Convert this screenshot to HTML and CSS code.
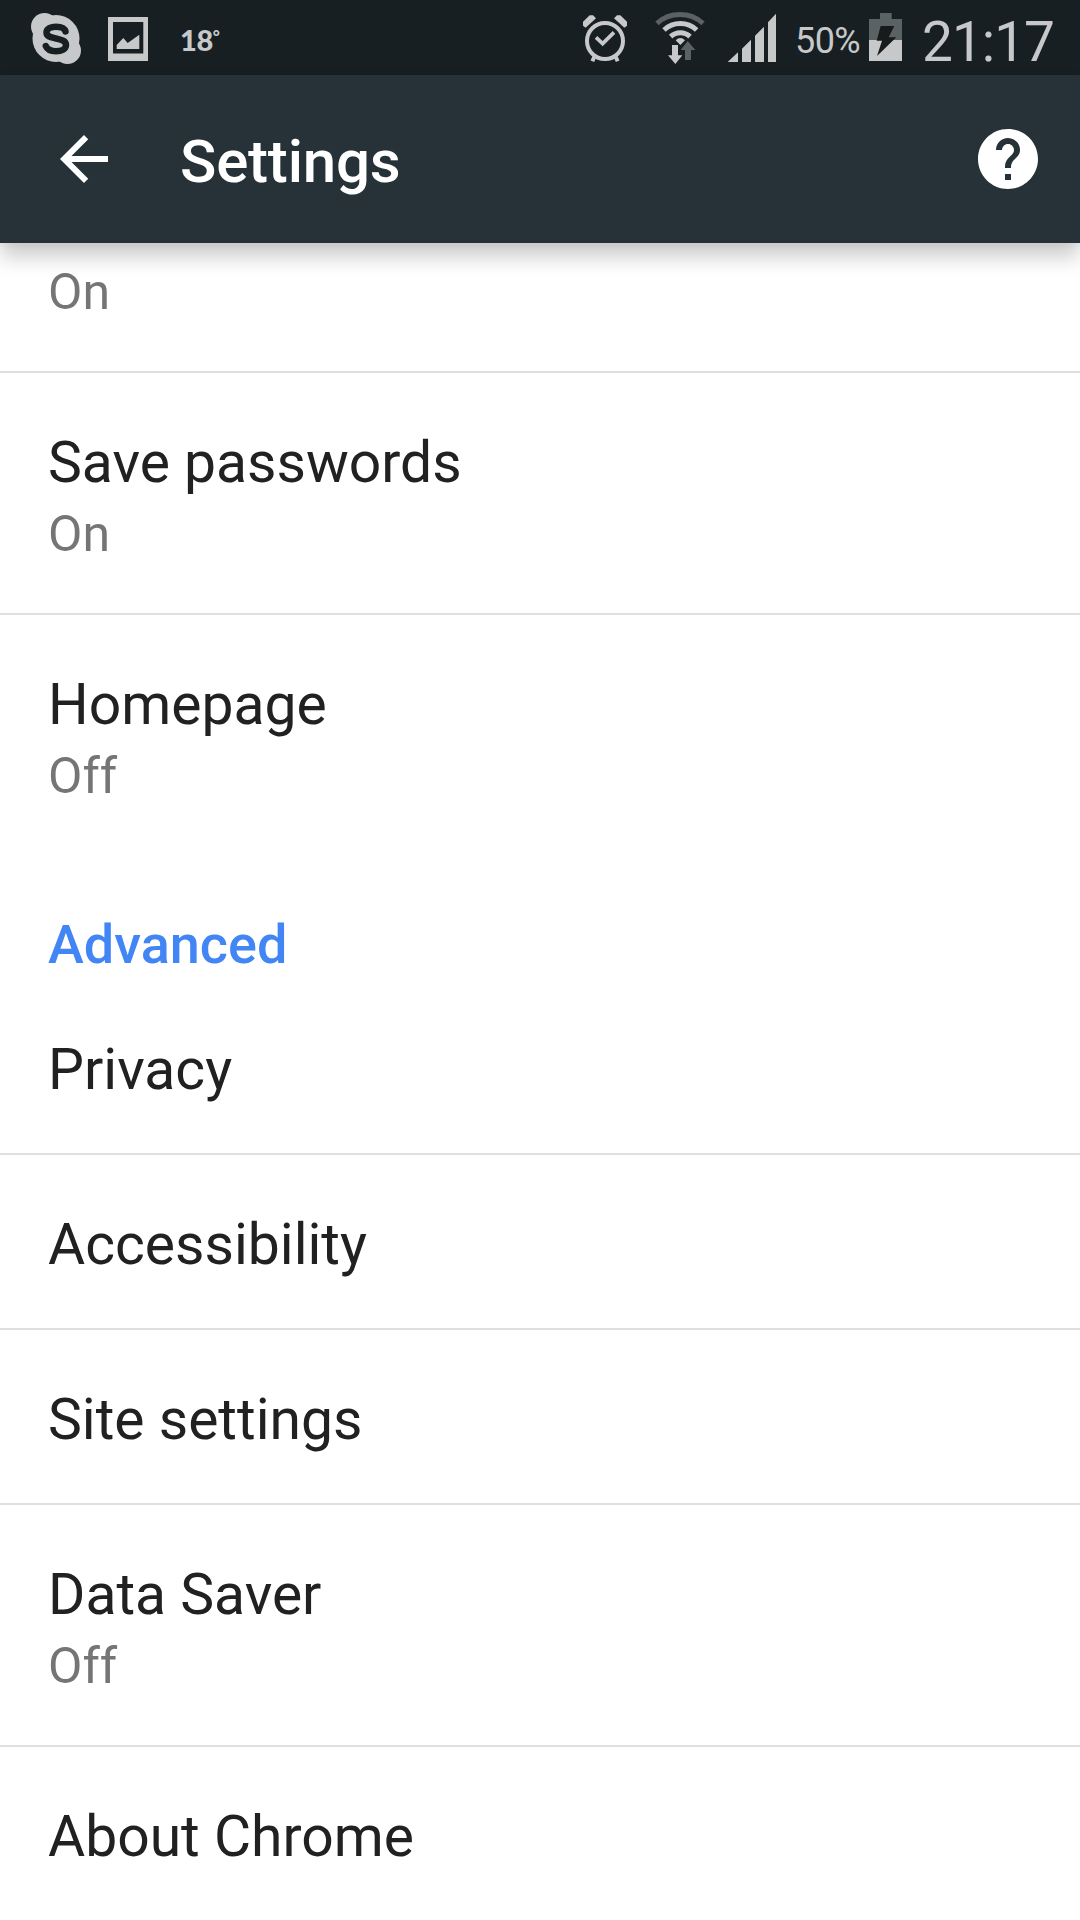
FILE: index.html
```html
<!DOCTYPE html>
<html lang="en">
<head>
<meta charset="utf-8">
<title>Settings</title>
<link rel="stylesheet" href="styles.css">
</head>
<body>
<div class="screen">
  <div class="status-bar">
    <svg class="status-skype" width="50" height="51" viewBox="31 13 50 51">
      <circle cx="56" cy="38.500" r="23.500" fill="#c6c8ca"/>
      <circle cx="44.500" cy="26.500" r="13.500" fill="#c6c8ca"/>
      <circle cx="67.500" cy="50.500" r="13.500" fill="#c6c8ca"/>
      <path d="M65.500 31.500C64.500 28 61 26.700 56 26.700c-5 0-9.500 1.800-9.500 5.800 0 4.200 4.500 4.800 9.500 6s10 2.200 10 6.500c0 4-4.500 6.200-10 6.200s-9-2.200-10.200-5.200" fill="none" stroke="#181f22" stroke-width="6.500" stroke-linecap="round"/>
    </svg>
    <svg class="status-picture" width="40" height="44" viewBox="0 0 40 44">
      <path fill="#c6c8ca" fill-rule="evenodd" d="M0 0h40v44H0zM5 5v31.500h30.300V5z"/>
      <path fill="#c6c8ca" d="M8.700 32v-4l6.600-7 4.400 5 11.600-8.300V32z"/>
    </svg>
    <span class="status-temp">18<span class="status-degree">°</span></span>
    <div class="status-right">
      <svg class="status-signals" width="196" height="75" viewBox="0 0 588 225">
        <g transform="translate(-60 0)" fill="#c6c8ca">
          <g fill="none" stroke="#c6c8ca">
            <circle cx="135" cy="123" r="54" stroke-width="12"/>
            <path d="M108 112l20 19 34-34" stroke-width="11"/>
            <path d="M103 170l-6 14M167 170l6 14" stroke-width="12"/>
          </g>
          <path d="M77 83l-8-6v-12l20-19h10l9 9zM193 83l8-6v-12l-20-19h-10l-9 9z"/>
          <g fill="none" stroke-width="15">
            <path d="M291 70A104 104 0 0 1 429 70" stroke="#5b6264"/>
            <path d="M312 90A72 72 0 0 1 410 90" stroke="#c6c8ca"/>
            <path d="M332 110A42 42 0 0 1 390 110" stroke="#c6c8ca"/>
          </g>
          <path d="M347 121q14-14 28 0l-14 14z"/>
          <path d="M336 135h18v31h13l-21 26-22-26h12z"/>
          <path d="M383 123l23 27h-13v30h-18v-30h-13z" fill="#5b6264"/>
          <path d="M503 186l31-29v29zM546 146l27-27v67h-27zM585 107l27-27v106h-27zM624 67l24-26v145h-24z"/>
        </g>
      </svg>
      <span class="status-percent">50%</span>
      <svg class="status-battery" width="33" height="48" viewBox="0 0 99 144">
        <path d="M33 0h35v18h31v63H0V18h33z" fill="#5b6264"/>
        <path d="M0 81h99v63H0z" fill="#c6c8ca"/>
        <path d="M35 39h41L59 73h23L24 129l15-46H23z" fill="#181a1b"/>
      </svg>
      <span class="status-clock">21:17</span>
    </div>
  </div>
  <header class="toolbar">
    <svg class="toolbar-icon" viewBox="0 0 24 24"><path fill="#fff" d="M20 11H7.830l5.590-5.590L12 4l-8 8 8 8 1.410-1.410L7.830 13H20z"/></svg>
    <h1 class="toolbar-title">Settings</h1>
    <svg class="toolbar-icon" viewBox="0 0 24 24"><path fill="#fff" d="M12 2C6.480 2 2 6.480 2 12s4.480 10 10 10 10-4.480 10-10S17.520 2 12 2zm1 17h-2v-2h2zm2.070-7.750-.9.920C13.450 12.900 13 13.500 13 15h-2v-.5c0-1.100.45-2.100 1.170-2.830l1.240-1.260c.37-.36.59-.86.590-1.410 0-1.100-.9-2-2-2s-2 .9-2 2H8c0-2.210 1.790-4 4-4s4 1.790 4 4c0 .88-.36 1.680-.93 2.250z"/></svg>
  </header>
  <main class="list">
    <div class="row row-clipped"><div class="summary">On</div></div>
    <div class="row"><div class="title">Save passwords</div><div class="summary">On</div></div>
    <div class="row row-last"><div class="title">Homepage</div><div class="summary">Off</div></div>
    <h2 class="category">Advanced</h2>
    <div class="row"><div class="title">Privacy</div></div>
    <div class="row"><div class="title">Accessibility</div></div>
    <div class="row"><div class="title">Site settings</div></div>
    <div class="row"><div class="title">Data Saver</div><div class="summary">Off</div></div>
    <div class="row row-last"><div class="title">About Chrome</div></div>
  </main>
</div>
</body>
</html>
```
FILE: styles.css
```css
* { box-sizing: border-box; }
body { margin: 0; background: #fff; font-family: Roboto, "Liberation Sans", sans-serif; }
.screen { width: 1080px; height: 1920px; overflow: hidden; display: flex; flex-direction: column; background: #fff; }

.status-bar { flex: none; height: 75px; display: flex; align-items: flex-start; padding-left: 31px; padding-right: 26px; background: #181f22; color: #c6c8ca; }
.status-skype { margin-top: 13px; }
.status-picture { margin-top: 17px; margin-left: 27px; }
.status-temp { margin-top: 22px; margin-left: 32px; font: 900 29px/36px Lato, sans-serif; letter-spacing: -0.4px; }
.status-degree { display: inline-block; font-size: 17px; line-height: 20px; vertical-align: 8px; }
.status-right { margin-left: auto; display: flex; align-items: flex-start; }
.status-percent { width: 74px; margin-top: 20px; margin-left: 19px; font-size: 36px; line-height: 42px; letter-spacing: -0.6px; }
.status-battery { margin-top: 13px; }
.status-clock { width: 132px; margin-top: 10px; margin-left: 20px; font-size: 55px; line-height: 64px; letter-spacing: -1px; }

.toolbar { flex: none; height: 168px; display: flex; align-items: center; padding: 0 36px 0 48px; background: #263238; color: #fff; box-shadow: 0 3px 6px rgba(0,0,0,.04), 0 14px 20px rgba(0,0,0,.2); z-index: 1; }
.toolbar-icon { width: 72px; height: 72px; }
.toolbar-title { flex: 1; margin: 6px 0 0 60px; font-size: 60px; line-height: 70px; font-weight: 500; letter-spacing: -0.2px; }

.list { flex: 1; }
.row { padding: 56px 48px 50px; border-bottom: 2px solid #e0e0e0; }
.row-clipped { padding-top: 11px; }
.row-last { border-bottom: 0; }
.title { font-size: 57px; line-height: 67px; color: #212121; }
.summary { padding-top: 8px; margin-bottom: -1px; font-size: 50px; line-height: 60px; color: #757575; }
.category { margin: 0; padding: 58px 48px 4px; font-size: 54px; line-height: 63px; font-weight: 500; color: #4285f4; }
```
